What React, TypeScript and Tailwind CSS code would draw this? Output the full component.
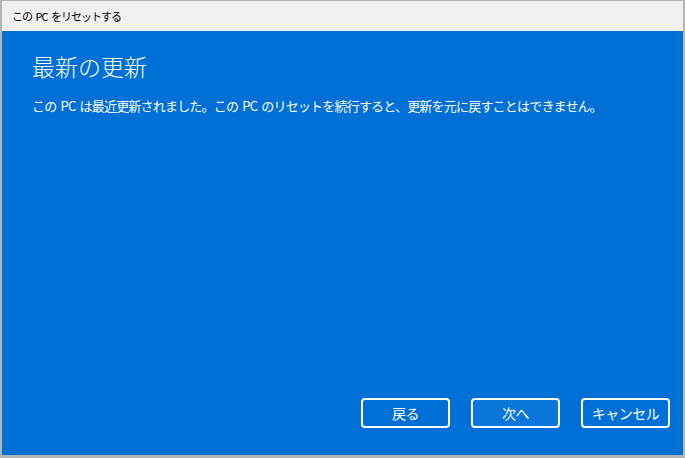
import React from 'react';

const font = { fontFamily: '"Noto Sans CJK JP", "Noto Sans", sans-serif' };

const DialogButton: React.FC<{ label: string; focused?: boolean }> = ({ label, focused }) => (
  <button
    className={`w-[89px] h-[30px] rounded-[4px] border-2 border-white text-white text-[14px] tracking-[-0.5px] flex items-center justify-center ${
      focused ? 'bg-[#0c77db]' : 'bg-transparent'
    }`}
  >
    {label}
  </button>
);

export default function App() {
  return (
    <div className="w-[685px] h-[458px] bg-[#b4b4b4] pt-px pl-[2px] pr-[2px] pb-[3px]" style={font}>
      <div className="w-full h-full flex flex-col">
        {/* title bar */}
        <div className="h-[30px] bg-[#f0f0f0] flex items-center pl-[10px] text-[11px] tracking-[-1px] [word-spacing:2px] text-black whitespace-pre">
          この PC をリセットする
        </div>

        {/* content */}
        <div className="flex-1 bg-[#006fd6] flex flex-col px-[30px] text-white">
          <h1 className="mt-[19px] text-[23px] font-light leading-[32px]">最新の更新</h1>
          <p className="mt-[14px] text-[13px] leading-[20px] tracking-[-0.8px] [word-spacing:2px]">
            この PC は最近更新されました。この PC のリセットを続行すると、更新を元に戻すことはできません。
          </p>
          <div className="mt-auto mb-[27px] flex justify-end gap-[21px] -mr-[17px]">
            <DialogButton label="戻る" />
            <DialogButton label="次へ" focused />
            <DialogButton label="キャンセル" />
          </div>
        </div>
      </div>
    </div>
  );
}
